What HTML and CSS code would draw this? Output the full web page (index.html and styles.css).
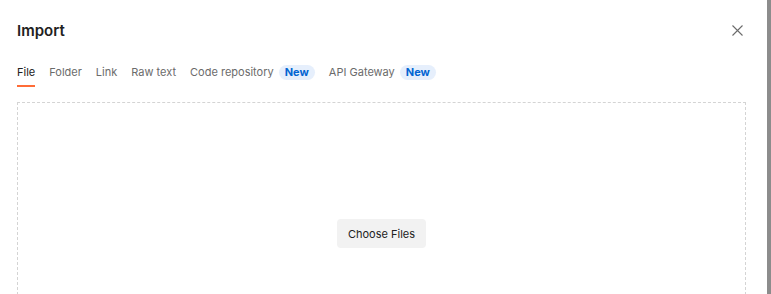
FILE: index.html
```html
<!DOCTYPE html>
<html lang="en">
<head>
  <meta charset="UTF-8">
  <meta name="viewport" content="width=device-width, initial-scale=1.0">
  <title>Import</title>
  <link rel="stylesheet" href="styles.css">
</head>
<body>
  <div class="modal">
    <div class="modal-header">
      <h1>Import</h1>
      <button class="close" aria-label="Close">
        <svg width="11" height="11" viewBox="0 0 11 11">
          <path d="M0.5 0.5 L10.5 10.5 M10.5 0.5 L0.5 10.5" stroke="#6b6b6b" stroke-width="1.1" fill="none"/>
        </svg>
      </button>
    </div>

    <div class="tabs">
      <a class="tab active" href="#">File</a>
      <a class="tab" href="#">Folder</a>
      <a class="tab" href="#">Link</a>
      <a class="tab" href="#">Raw text</a>
      <a class="tab" href="#">Code repository <span class="badge">New</span></a>
      <a class="tab" href="#">API Gateway <span class="badge">New</span></a>
    </div>

    <div class="dropzone">
      <button class="choose">Choose Files</button>
    </div>
  </div>
</body>
</html>
```

FILE: styles.css
```css
* {
  margin: 0;
  padding: 0;
  box-sizing: border-box;
}

body {
  font-family: Inter, "Noto Sans", Arial, sans-serif;
  background-color: #8c8c8c;
  height: 100vh;
  overflow: hidden;
}

/* Janela do modal */
.modal {
  background-color: #fff;
  width: 767px;
  height: 100%;
  padding: 0 21px 0 17px;
}

.modal-header {
  display: flex;
  align-items: center;
  justify-content: space-between;
  height: 60px;
}

h1 {
  font-size: 15px;
  font-weight: 600;
  color: #212121;
}

.close {
  background: none;
  border: none;
  width: 11px;
  height: 11px;
  margin-right: 3px;
  display: flex;
  cursor: pointer;
}

/* Abas */
.tabs {
  display: flex;
  align-items: flex-end;
  gap: 14px;
  margin-top: 4px;
}

.tab {
  display: flex;
  align-items: center;
  gap: 5px;
  font-size: 11px;
  line-height: 16px;
  color: #6b6b6b;
  text-decoration: none;
  padding-bottom: 5px;
  border-bottom: 2px solid transparent;
}

.tab.active {
  color: #212121;
  border-bottom-color: #ff6c37;
}

.badge {
  font-size: 11px;
  font-weight: 700;
  line-height: 15px;
  color: #0265d2;
  background-color: #e6effc;
  border-radius: 8px;
  padding: 0 6px;
}

/* Área de arrastar */
.dropzone {
  margin-top: 15px;
  border: 1px dashed #d4d4d4;
  padding: 116px 0;
  display: flex;
  justify-content: center;
}

.choose {
  font-family: inherit;
  font-size: 11px;
  color: #212121;
  background-color: #f2f2f2;
  border: none;
  border-radius: 4px;
  height: 29px;
  padding: 0 11px;
  cursor: pointer;
}
```
